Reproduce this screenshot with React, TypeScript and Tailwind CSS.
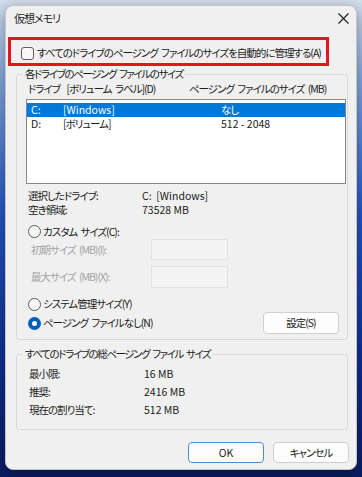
import React from "react";

const font = "font-['Noto_Sans_CJK_JP','Noto_Sans',sans-serif] [font-feature-settings:'palt'] tracking-[-1px] [word-spacing:2px]";
const latin = "tracking-normal [word-spacing:0px]";

function Radio({ checked }: { checked?: boolean }) {
  if (checked) {
    return (
      <span className="flex h-[13px] w-[13px] shrink-0 items-center justify-center rounded-full bg-[#005fb8]">
        <span className="h-[5px] w-[5px] rounded-full bg-white" />
      </span>
    );
  }
  return <span className="h-[13px] w-[13px] shrink-0 rounded-full border border-[#5c5c5c] bg-[#f7f7f7]" />;
}

function Group({ label, className, children }: { label: string; className: string; children: React.ReactNode }) {
  return (
    <div className={`relative ml-[10px] w-[332px] rounded-[3px] border border-[#dadada] ${className}`}>
      <span className="absolute left-[6px] top-[-9px] bg-[#f0f0f0] px-[2px] leading-[16px] tracking-[-1.4px]">{label}</span>
      {children}
    </div>
  );
}

export default function App() {
  return (
    <div className={`h-[477px] w-[362px] overflow-hidden bg-[linear-gradient(to_bottom,#d5e0ef_0%,#7fa3dd_18%,#2456c4_45%,#0f2f93_75%,#0a1c62_100%)] pl-[5px] pt-[5px] text-[10.5px] text-[#1b1b1b] ${font}`}>
      <div className="relative h-[465px] w-[352px] rounded-[8px] border border-[#c4c4c4] bg-[#f0f0f0] shadow-[0_4px_16px_rgba(0,0,0,0.35)]">
        {/* title bar */}
        <div className="flex h-[24px] items-center justify-between pl-[8px] pr-[6px]">
          <span className="text-[11px] leading-[16px]">仮想メモリ</span>
          <svg width="11" height="11" viewBox="0 0 11 11" className="mr-[1px]">
            <path d="M0.5 0.5 L10.5 10.5 M10.5 0.5 L0.5 10.5" stroke="#1b1b1b" strokeWidth="1.1" />
          </svg>
        </div>

        {/* auto-manage checkbox */}
        <div className="mt-[15px] flex h-[16px] items-center gap-[3px] pl-[15px]">
          <span className="h-[13px] w-[13px] shrink-0 rounded-[3px] border border-[#5c5c5c] bg-[#f7f7f7]" />
          <span className="whitespace-nowrap leading-[16px]">すべてのドライブのページング ファイルのサイズを自動的に管理する(A)</span>
        </div>

        <Group label="各ドライブのページング ファイルのサイズ" className="mt-[13px] h-[266px]">
          <div className="mt-[6px] flex h-[16px] items-center whitespace-nowrap leading-[16px]">
            <span className="ml-[11px] w-[161px]">ドライブ&nbsp; [ボリューム ラベル](D)</span>
            <span>ページング ファイルのサイズ (MB)</span>
          </div>

          <div className="ml-[9px] mt-[2px] h-[85px] w-[320px] border border-[#828790] bg-white pt-[3px]">
            <div className="flex h-[14px] items-center bg-[#0078d7] pl-[4px] leading-[14px] text-white">
              <span className={`w-[32px] ${latin}`}>C:</span>
              <span className={`w-[158px] ${latin}`}>[Windows]</span>
              <span>なし</span>
            </div>
            <div className="flex h-[14px] items-center pl-[4px] leading-[14px]">
              <span className={`w-[32px] ${latin}`}>D:</span>
              <span className="w-[158px]">[ボリューム]</span>
              <span className={latin}>512 - 2048</span>
            </div>
          </div>

          <div className="mt-[5px] flex h-[14px] items-center pl-[11px] leading-[14px]">
            <span className="w-[114px]">選択したドライブ:</span>
            <span className={latin}>C:&nbsp; [Windows]</span>
          </div>
          <div className="flex h-[14px] items-center pl-[11px] leading-[14px]">
            <span className="w-[114px]">空き領域:</span>
            <span className={latin}>73528 MB</span>
          </div>

          <div className="mt-[7px] flex h-[15px] items-center gap-[2px] pl-[11px] leading-[15px]">
            <Radio />
            <span>カスタム サイズ(C):</span>
          </div>
          <div className="flex h-[21px] items-center pl-[14px] leading-[16px] text-[#a3a3a3]">
            <span className="w-[120px]">初期サイズ (MB)(I):</span>
            <span className="h-[21px] w-[77px] border border-[#e2e2e2] bg-[#f4f4f4]" />
          </div>
          <div className="mt-[6px] flex h-[21px] items-center pl-[14px] leading-[16px] text-[#a3a3a3]">
            <span className="w-[120px]">最大サイズ (MB)(X):</span>
            <span className="h-[22px] w-[77px] border border-[#e2e2e2] bg-[#f4f4f4]" />
          </div>

          <div className="mt-[9px] flex h-[16px] items-center gap-[2px] pl-[11px] leading-[16px]">
            <Radio />
            <span>システム管理サイズ(Y)</span>
          </div>
          <div className="flex h-[22px] items-center justify-between pl-[11px] pr-[8px]">
            <div className="flex items-center gap-[2px] leading-[16px]">
              <Radio checked />
              <span>ページング ファイルなし(N)</span>
            </div>
            <button className="h-[22px] w-[76px] rounded-[4px] border border-[#d0d0d0] bg-[#fdfdfd] leading-[16px] text-[#1b1b1b]">
              設定(S)
            </button>
          </div>
        </Group>

        <Group label="すべてのドライブの総ページング ファイル サイズ" className="mt-[14px] h-[76px]">
          <div className="pt-[10px]">
            {[
              ["最小限:", "16 MB"],
              ["推奨:", "2416 MB"],
              ["現在の割り当て:", "512 MB"],
            ].map(([k, v]) => (
              <div key={k} className="flex h-[18px] items-center pl-[12px] leading-[16px]">
                <span className="w-[115px]">{k}</span>
                <span className={latin}>{v}</span>
              </div>
            ))}
          </div>
        </Group>

        <div className="mt-[12px] flex justify-end gap-[9px] pr-[7px]">
          <button className={`h-[21px] w-[76px] rounded-[4px] border border-[#4b8ed4] bg-[#fdfdfd] leading-[16px] text-[#1b1b1b] ${latin}`}>
            OK
          </button>
          <button className="h-[21px] w-[76px] rounded-[4px] border border-[#d0d0d0] bg-[#fdfdfd] leading-[16px] text-[#1b1b1b]">
            キャンセル
          </button>
        </div>

        {/* red highlight annotation */}
        <div className="pointer-events-none absolute left-[2px] top-[31px] h-[29px] w-[321px] border-[3px] border-[#e5141e]" />
      </div>
    </div>
  );
}
